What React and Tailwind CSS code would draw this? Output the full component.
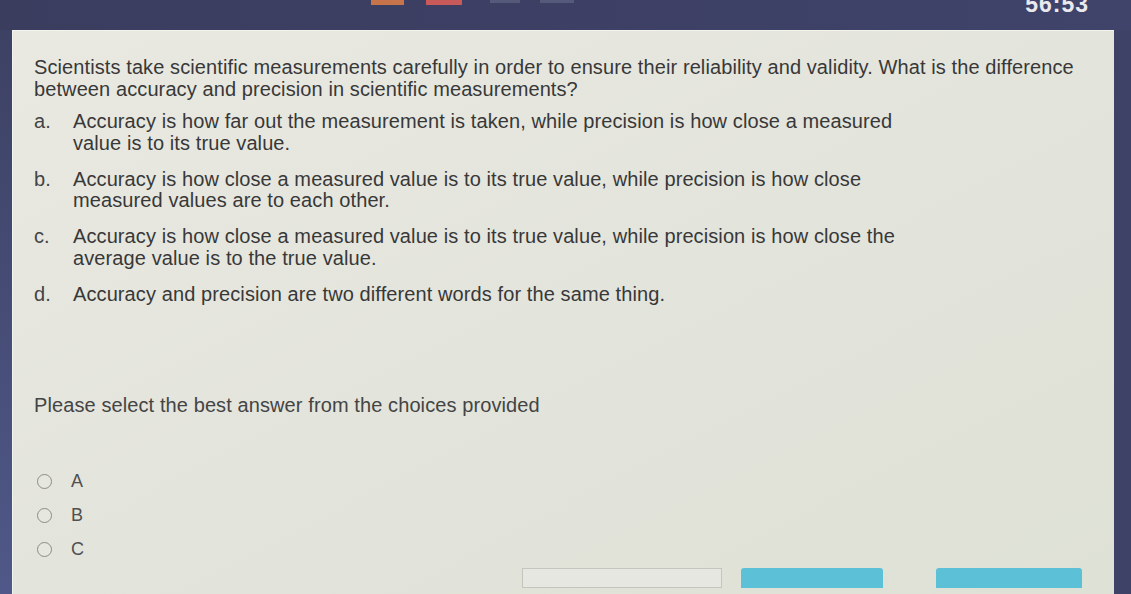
import React from "react";

const OPTIONS = [
  {
    key: "a.",
    lines: ["Accuracy is how far out the measurement is taken, while precision is how close a measured", "value is to its true value."],
  },
  {
    key: "b.",
    lines: ["Accuracy is how close a measured value is to its true value, while precision is how close", "measured values are to each other."],
  },
  {
    key: "c.",
    lines: ["Accuracy is how close a measured value is to its true value, while precision is how close the", "average value is to the true value."],
  },
  {
    key: "d.",
    lines: ["Accuracy and precision are two different words for the same thing."],
  },
];

function Radio({ label }) {
  return (
    <label className="flex items-center h-[34px]">
      <span className="w-[15px] h-[15px] rounded-full border-[1.5px] border-[#8c8c88] bg-[#e6e7df] ml-[3px]" />
      <span className="ml-[19px] text-[18px] text-[#505050]">{label}</span>
    </label>
  );
}

export default function App() {
  return (
    <div
      className="w-[1131px] h-[594px] overflow-hidden bg-[#3e4266] flex flex-col"
      style={{ fontFamily: '"Liberation Sans", Arial, sans-serif' }}
    >
      {/* top bar */}
      <div className="h-[30px] shrink-0 flex items-start bg-gradient-to-r from-[#3a3d5e] to-[#40436a]">
        <div className="ml-[371px] w-[33px] h-[5px] bg-[#c8744a]" />
        <div className="ml-[22px] w-[36px] h-[5px] bg-[#c85a5a]" />
        <div className="ml-[28px] w-[30px] h-[3px] bg-[#55597a]" />
        <div className="ml-[20px] w-[34px] h-[3px] bg-[#55597a]" />
        <div className="ml-auto mr-[42px] -mt-[13px] text-[23px] font-bold text-[#e9e9ee] tracking-[1px]">
          56:53
        </div>
      </div>

      <div className="flex flex-1 min-h-0">
        <div className="w-[12px] shrink-0 bg-gradient-to-b from-[#3d4164] to-[#4f5888]" />
        <div className="w-[1102px] shrink-0 bg-gradient-to-br from-[#e9e9e2] via-[#e3e4dc] to-[#dee1d5] border-t border-l border-[#f4f4ee] text-[#383838]">
          <div className="pl-[21px] pt-[26px] text-[20px] tracking-[0.1px] leading-[21.5px]">
            <p>Scientists take scientific measurements carefully in order to ensure their reliability and validity. What is the difference</p>
            <p>between accuracy and precision in scientific measurements?</p>

            <div className="mt-[11px] flex flex-col gap-[14.5px]">
              {OPTIONS.map((o) => (
                <div key={o.key} className="flex">
                  <span className="w-[39px] shrink-0 text-[#444]">{o.key}</span>
                  <div>
                    {o.lines.map((l) => (
                      <div key={l}>{l}</div>
                    ))}
                  </div>
                </div>
              ))}
            </div>

            <p className="mt-[90px] text-[#444]">Please select the best answer from the choices provided</p>

            <div className="mt-[48px] flex flex-col tracking-normal">
              <Radio label="A" />
              <Radio label="B" />
              <Radio label="C" />
            </div>

            <div className="mt-[1px] flex ml-[488px]">
              <div className="w-[200px] h-[20px] border border-[#c4c5bd] bg-[#e6e7e0]" />
              <div className="ml-[19px] w-[142px] h-[20px] rounded-t-[3px] bg-[#5cc0d6]" />
              <div className="ml-[53px] w-[146px] h-[20px] rounded-t-[3px] bg-[#5cc0d6]" />
            </div>
          </div>
        </div>
      </div>
    </div>
  );
}
